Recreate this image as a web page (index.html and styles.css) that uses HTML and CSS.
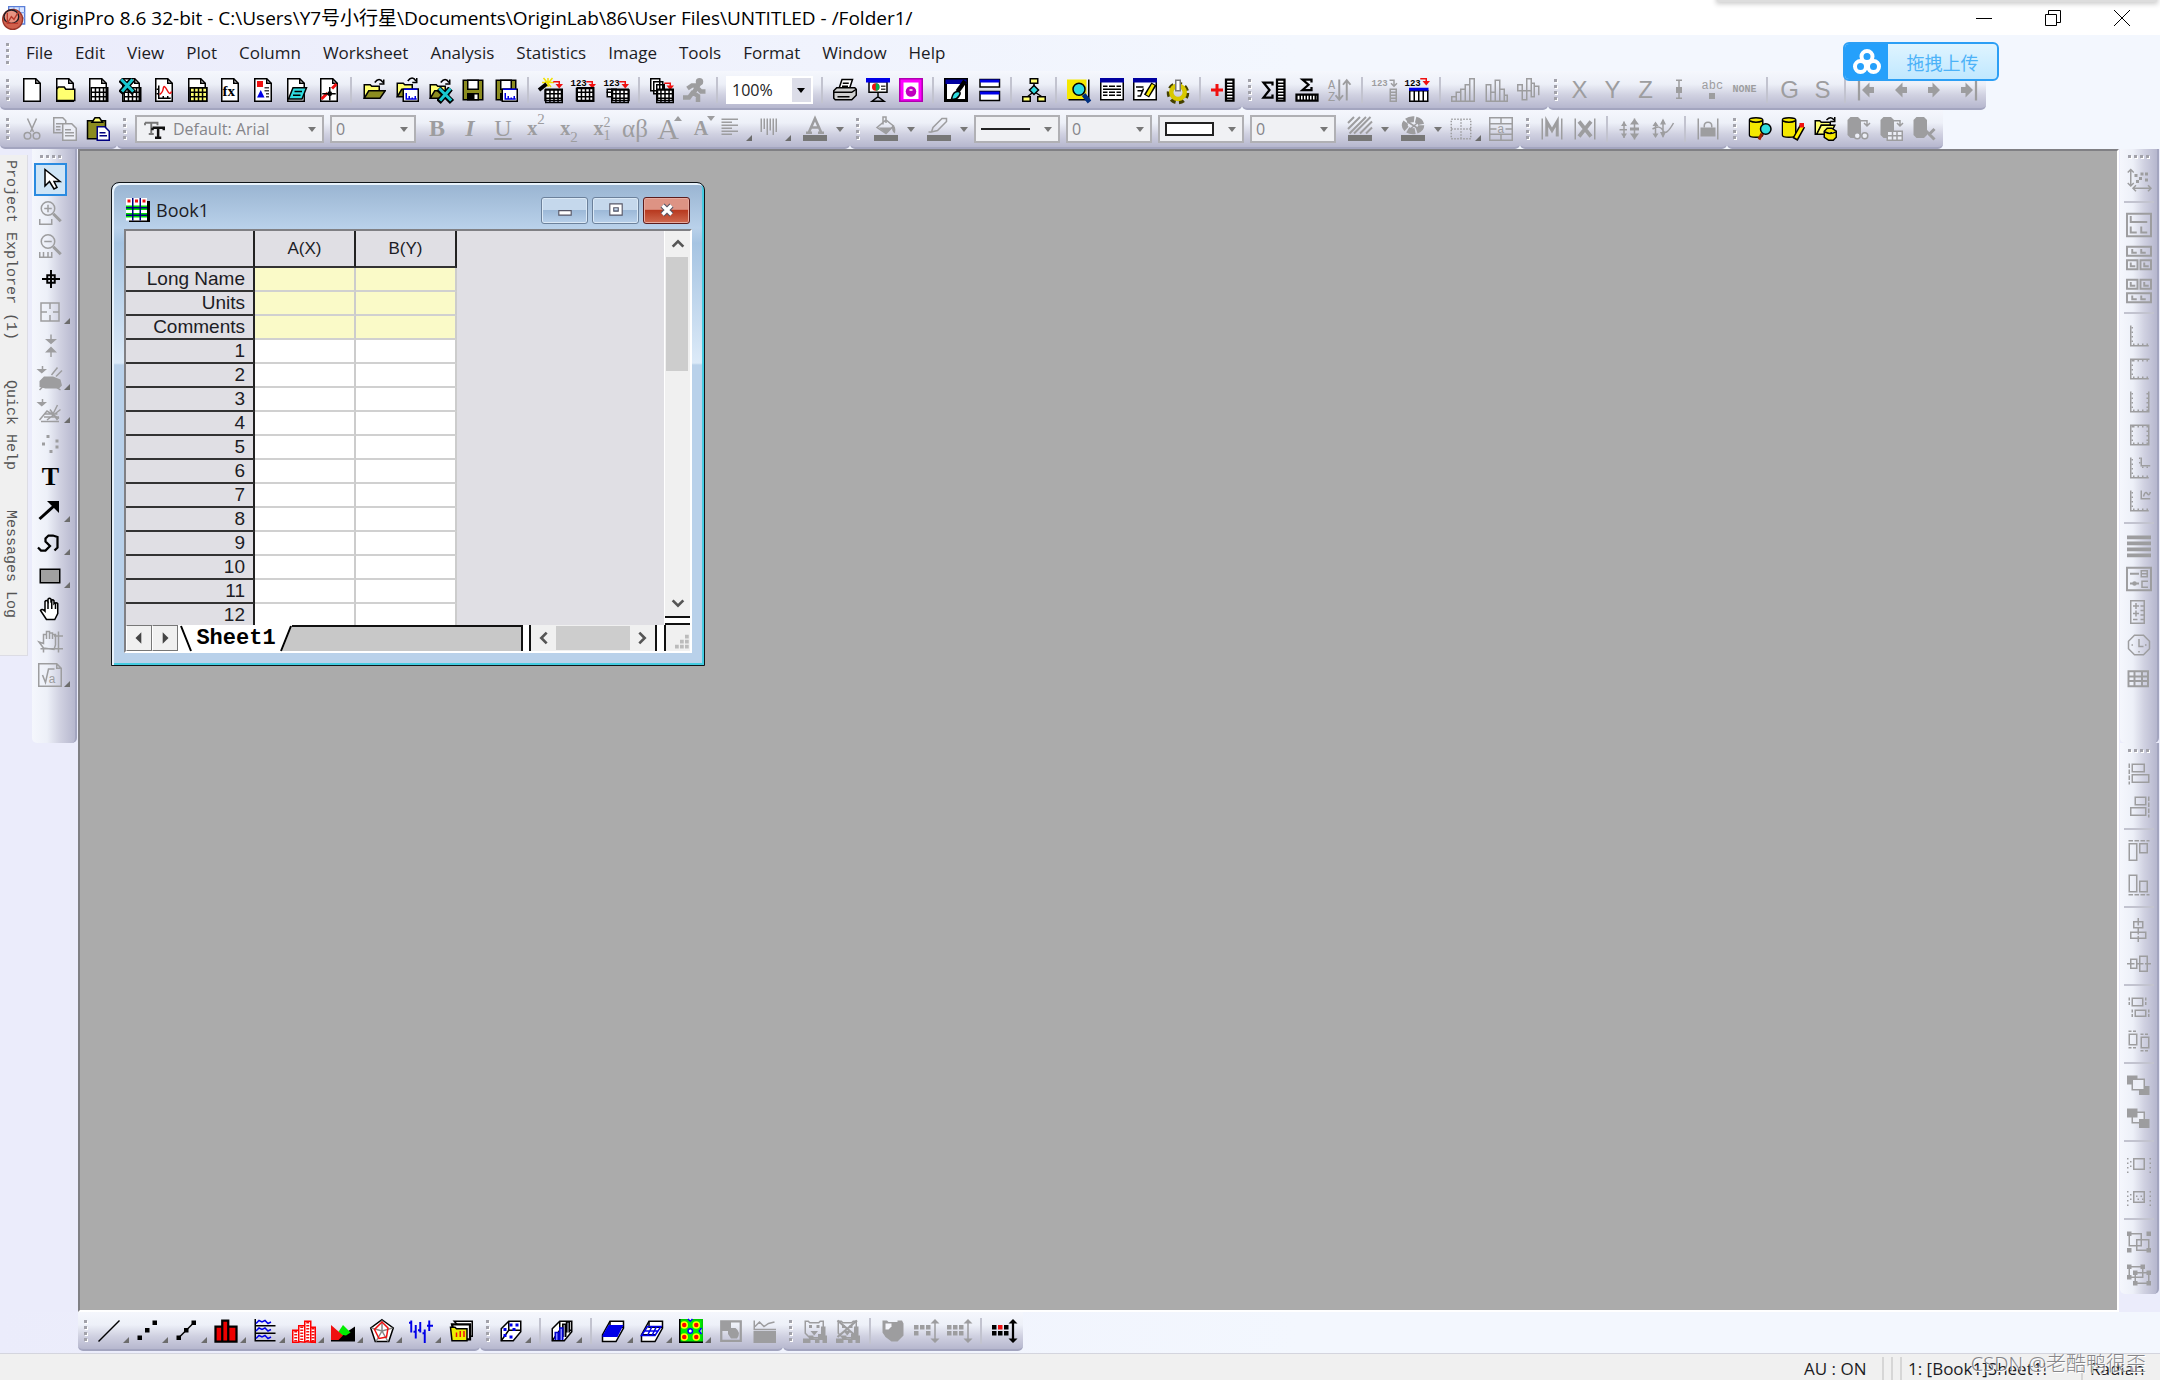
FILE: index.html
```html
<!DOCTYPE html>
<html lang="en">
<head>
<meta charset="utf-8">
<title>OriginPro 8.6</title>
<link rel="stylesheet" href="styles.css">
</head>
<body>
<svg class="defs" aria-hidden="true">
  <symbol id="doc" viewBox="0 0 16 16"><path class="w" d="M2.500.5h8l3 3v12h-11z"/><path d="M10.500.5v3h3"/></symbol>
  <symbol id="grid" viewBox="0 0 16 16"><path d="M3.500 6.500h11v9h-11zM3.500 9.500h11M3.500 12.500h11M6.300 6.500v9M9 6.500v9M11.700 6.500v9"/></symbol>
  <symbol id="open" viewBox="0 0 16 16"><path class="y" d="M1.500 13.500v-9h4l1 1h5v3"/><path class="o" d="M1.500 13.500l3-5h11l-3.500 5z"/><path d="M8.500 3q3-4 5.500 0M14.500 1v3h-3"/></symbol>
  <symbol id="disk" viewBox="0 0 16 16"><path class="o" d="M1.500 1.500h13v13H1.500z"/><path class="w" d="M4.500 1.500h7v6h-7z"/><path class="k" d="M4 10h8v5H4z"/><path class="wf" d="M9 11h2v3H9z"/></symbol>
  <symbol id="win" viewBox="0 0 16 16"><path class="w" d="M5.500 7.500h10v8h-10z"/><path class="bf" d="M6 7h9v1H6z"/><path class="bs" d="M7.500 10v4h7M9.500 14v-2M11.500 14v-1M13.500 14v-2"/></symbol>
  <symbol id="ex" viewBox="0 0 16 16"><path d="M1 1l9 9M9 1l-8 9" class="xs"/><path d="M1.500 1l8 8M9 1l-7 8" class="xc"/></symbol>
  <symbol id="redin" viewBox="0 0 16 16"><path class="rs" d="M9.500 2.500h4V5"/><path class="rf" d="M11 4h5l-2.500 3z"/></symbol>
  <symbol id="cube" viewBox="0 0 16 16"><path class="w" d="M1.500 6.500l5-5h8v7l-5 6h-8z"/><path d="M6.500 1.500v6h8M6.500 7.500l-5 7"/></symbol>
  <symbol id="box" viewBox="0 0 16 16"><path class="w" d="M1 10.500l5-9h9v4.500l-5 9H1z"/><path d="M6 1.500v4h9M1 10.500h9"/></symbol>
  <symbol id="face" viewBox="0 0 16 16"><path d="M1.500 1.500h2l1 1h6l1-1h2v8l-3 3h-6l-3-3z"/><path class="k" d="M4 4h2v2H4zM9 4h2v2H9zM5 8h5l-2.500 3zM0 13h4v-2h3v2h3v-3h2V5h3v6h1v5h-3v-2h-2v2h-3v-2H5v2H0z"/></symbol>
  <symbol id="cyl" viewBox="0 0 16 16"><path class="k" d="M1 2l2-2h5l2 2v10l-2 2H3l-2-2z"/></symbol>
  <symbol id="cyly" viewBox="0 0 16 16"><path class="yd" d="M.500 2q0-1.500 4.500-1.500T9.500 2v10q0 1.500-4.500 1.500T.500 12z"/><path d="M.500 2.500q4.500 2 9 0"/></symbol>
</svg>

<header class="titlebar">
  <svg class="logo" viewBox="0 0 18 18"><path d="M5 .5h12v13H5z" fill="#dbe6ff" stroke="#5b7fd8"/><path d="M9 1v12M13 1v12M5 5h12M5 9h12" stroke="#83a3e8"/><ellipse cx="8" cy="10" rx="7.500" ry="7.500" fill="#d0604c" stroke="#9b3528"/><ellipse cx="7" cy="8" rx="5.500" ry="5" fill="#e89482"/><path d="M4 13l3-5 2 2 3-5M4 5v8h8" stroke="#b83a2c" fill="none"/></svg>
  <h1>OriginPro 8.6 32-bit - C:\Users\Y7号小行星\Documents\OriginLab\86\User Files\UNTITLED - /Folder1/</h1>
  <div class="caption">
    <button aria-label="Minimize"><svg viewBox="0 0 16 16"><path d="M0 8.500h16"/></svg></button>
    <button aria-label="Restore"><svg viewBox="0 0 16 16"><path d="M.500 4.500h11v11H.500zM3.500 4V.500h12v12H12"/></svg></button>
    <button aria-label="Close"><svg viewBox="0 0 16 16"><path d="M0 0l16 16M16 0L0 16"/></svg></button>
  </div>
  <div class="topshade"></div>
</header>

<nav class="menubar">
  <span class="grip"></span>
  <button>File</button><button>Edit</button><button>View</button><button>Plot</button><button>Column</button><button>Worksheet</button><button>Analysis</button><button>Statistics</button><button>Image</button><button>Tools</button><button>Format</button><button>Window</button><button>Help</button>
  <button class="upload"><span class="cloud"><svg viewBox="0 0 28 26"><g fill="none" stroke="#fff" stroke-width="4"><circle cx="14" cy="7.500" r="5.500"/><circle cx="7.500" cy="17.500" r="5.500"/><circle cx="20.500" cy="17.500" r="5.500"/></g></svg></span><span class="uptext">拖拽上传</span></button>
</nav>

<div class="toolrow">
  <div class="toolbar">
    <span class="grip"></span>
    <button aria-label="New Project"><svg viewBox="0 0 16 16"><use href="#doc"/></svg></button>
    <button aria-label="New Folder"><svg viewBox="0 0 16 16"><use href="#doc"/><path class="y" d="M2.500 15V7.500l1-1.500h4l1 1.500h6V15z"/></svg></button>
    <button aria-label="New Workbook"><svg viewBox="0 0 16 16"><use href="#doc"/><use href="#grid"/></svg></button>
    <button aria-label="New Excel"><svg viewBox="0 0 16 16"><use href="#doc"/><use href="#grid"/><use href="#ex"/></svg></button>
    <button aria-label="New Graph"><svg viewBox="0 0 16 16"><use href="#doc"/><path d="M4.500 5v8.500h8M3 7.500h2M3 10.500h2M7.500 12v2M10.500 12v2"/><path class="rs" d="M5 11q2-1 2.500-4t2.500 1 3 1"/></svg></button>
    <button aria-label="New Matrix"><svg viewBox="0 0 16 16"><use href="#doc"/><path class="y" d="M3.500 6.500h11v9h-11z"/><use href="#grid"/></svg></button>
    <button aria-label="New Function"><svg viewBox="0 0 16 16"><use href="#doc"/><text x="3" y="12" class="t9">fx</text></svg></button>
    <button aria-label="New Layout"><svg viewBox="0 0 16 16"><use href="#doc"/><path class="rf" d="M4 2h4v4H4z"/><path class="bf" d="M4 13l2.500-5L9 13z"/><path class="ks" d="M9 6.500h3M9 8.500h3M10 10.500h2M10 12.500h2"/></svg></button>
    <button aria-label="New Notes"><svg viewBox="0 0 16 16"><use href="#doc"/><path class="c" d="M6 6.500h9l-3 7.500H3z"/><path d="M7 9h5M6 11.500h5"/></svg></button>
    <button aria-label="Digitize"><svg viewBox="0 0 16 16"><use href="#doc"/><path class="rs" d="M3 14l4-4M10 7l3-3" stroke-width="2"/><path d="M3.500 10.500h9M8.500 6v9"/><circle cx="8.500" cy="10.500" r="1.600" class="k"/></svg></button>
    <i class="sep"></i>
    <button aria-label="Open"><svg viewBox="0 0 16 16"><use href="#open"/></svg></button>
    <button aria-label="Open Template"><svg viewBox="0 0 16 16"><use href="#open" y="-1"/><use href="#win"/></svg></button>
    <button aria-label="Open Excel"><svg viewBox="0 0 16 16"><use href="#open"/><use href="#ex" x="6" y="6"/></svg></button>
    <button aria-label="Save Project"><svg viewBox="0 0 16 16"><use href="#disk"/></svg></button>
    <button aria-label="Save Template"><svg viewBox="0 0 16 16"><use href="#disk"/><use href="#win"/></svg></button>
    <i class="sep"></i>
    <button aria-label="Import Wizard"><svg viewBox="0 0 16 16"><path stroke="#f0e000" d="M3 0l5 6M9 0L4 6M2 3h8M6 0v6"/><path d="M0 8l5-4" stroke-width="2.500"/><use href="#redin"/><path class="w" d="M4 8h11v7H4z"/><use href="#grid" y="1" x="1"/></svg></button>
    <button aria-label="Import ASCII"><svg viewBox="0 0 16 16"><text x="-1" y="5" class="t6">123</text><use href="#redin"/><path class="w" d="M3 7h11v8H3z"/><use href="#grid"/></svg></button>
    <button aria-label="Import Multiple ASCII"><svg viewBox="0 0 16 16"><text x="-1" y="5" class="t6">123</text><use href="#redin"/><path class="w" d="M1.500 7.500h6v5h-6z"/><path d="M1 9.500h4"/><path class="w" d="M5 8h11v7H5z"/><use href="#grid" x="1" y="1"/></svg></button>
    <i class="sep"></i>
    <button aria-label="Batch Processing"><svg viewBox="0 0 16 16"><path class="w" d="M.500.500h6v8h-6zM2.500 2.500h6v8h-6zM4.500 4.500h5v8h-5z"/><use href="#redin" y="1"/><path class="w" d="M5 8h10v7H5z"/><use href="#grid" x="1" y="1"/></svg></button>
    <button disabled aria-label="Recalculate"><svg viewBox="0 0 16 16"><circle class="k" cx="11" cy="2.500" r="2.500"/><path d="M3 7l3-2h4l-3 5 3 2v4M7 9l-3 4H0M10 7l2 2h3" stroke-width="3"/></svg></button>
    <i class="sep"></i>
    <label class="combo zoom"><select aria-label="Zoom"><option>100%</option></select></label>
    <i class="sep"></i>
    <button aria-label="Print"><svg viewBox="0 0 16 16"><path class="w" d="M4 7l2-6h7l-2 6z"/><path d="M6.500 3.500h4M6 5.500h4"/><path class="g" d="M.500 8.500l2-2h12l1 1v4l-3 3h-11l-1-1z"/><path d="M.500 9.500h12l3-2M3 12.500h8"/></svg></button>
    <button aria-label="Slide Show"><svg viewBox="0 0 16 16"><path class="w" d="M2 2.500h12v7H2z"/><path class="bf" d="M0 0h16v3H0z"/><circle cx="6.500" cy="6" r="2.500" class="rf"/><path fill="#00b050" stroke="none" d="M6.500 3.500a2.500 2.500 0 010 5z"/><path class="ks" d="M10 5.500h3M10 7.500h3"/><path d="M8 10v3M4 15.500l4-3 4 3z"/></svg></button>
    <button aria-label="Custom Routine"><svg viewBox="0 0 16 16"><path fill="#f0f" stroke="#b000b0" d="M.500.500h15v15H.500z"/><path fill="#fff" stroke="none" d="M3 3h10v11H3z"/><circle cx="8" cy="9" r="3.500" fill="#c000c0" stroke="none"/><path stroke="#fff" d="M7 8h2"/></svg></button>
    <i class="sep"></i>
    <button aria-label="Edit Theme"><svg viewBox="0 0 16 16"><path class="w" d="M1 1h14v14H1z" stroke-width="2"/><path class="nf" d="M1 1h14v3H1z"/><path d="M14 2L9 9" stroke-width="3"/><path class="c" d="M5 14q1-5 4-5t1 3-5 2z"/></svg></button>
    <button aria-label="Duplicate"><svg viewBox="0 0 16 16"><path class="w" d="M2 1h13v5H2zM2 9h13v6H2z"/><path class="bf" d="M2 1h13v2H2zM2 9h13v2H2z"/></svg></button>
    <i class="sep"></i>
    <button aria-label="Project Explorer"><svg viewBox="0 0 16 16"><path d="M8 3v4M8 9l-5 4M8 9l6 4"/><path class="y" d="M5.500.500h5v3h-5zM.500 12.500h5v3h-5zM10.500 12.500h5v3h-5z"/><path class="c" d="M8 5l3 3-3 3-3-3z"/></svg></button>
    <i class="sep"></i>
    <button aria-label="View Results"><svg viewBox="0 0 16 16"><path fill="#f5e800" stroke="none" d="M0 1h13v13H0z"/><path d="M1 14.500h13M14.500 1v13"/><circle cx="8" cy="7.500" r="4" class="c"/><path stroke="#003080" stroke-width="3" d="M11 11l4 5"/></svg></button>
    <button aria-label="Results Log"><svg viewBox="0 0 16 16"><path class="w" d="M.500.500h15v14H.500z"/><path class="nf" d="M0 0h16v3H0z"/><path d="M2 5.500h3M6 5.500h4M11 5.500h3M2 7.500h12M2 9.500h3M6 9.500h4M11 9.500h3M2 11.500h3M6 11.500h4M11 11.500h3"/></svg></button>
    <button aria-label="Script Window"><svg viewBox="0 0 16 16"><path class="w" d="M.500.500h15v14H.500z"/><path class="nf" d="M0 0h16v3H0z"/><path d="M2 6h5M3 8.500h4M3 12h2l2-5"/><path d="M14 4l-5 8" stroke-width="4"/><path stroke="#f5e800" stroke-width="2" d="M13.500 4.500l-4 7"/></svg></button>
    <button aria-label="Code Builder"><svg viewBox="0 0 16 16"><circle cx="8" cy="10" r="5.500" stroke="#444000" stroke-width="4" stroke-dasharray="3 2"/><circle cx="8" cy="9.500" r="4.500" stroke="#d8c800" stroke-width="3"/><path fill="#fff" stroke="#777" d="M6.500 1.500h3v7h-3z"/></svg></button>
    <i class="sep"></i>
    <button aria-label="Add New Columns"><svg viewBox="0 0 16 16"><path class="rs" stroke-width="2" d="M0 8h8M4 4v8"/><path class="w" d="M10 1h5v14h-5z" stroke-width="1.500"/><path d="M10 3.500h5M10 5.500h5M10 7.500h5M10 9.500h5M10 11.500h5M10 13.500h5"/></svg></button>
  </div>
  <div class="toolbar">
    <span class="grip"></span>
    <button aria-label="Column Statistics"><svg viewBox="0 0 16 16"><path d="M7 5V3H1l4 5-4 5h6v-2" stroke-width="1.500"/><path class="w" d="M10 1h5v14h-5z" stroke-width="1.500"/><path d="M10 3.500h5M10 5.500h5M10 7.500h5M10 9.500h5M10 11.500h5M10 13.500h5"/></svg></button>
    <button aria-label="Row Statistics"><svg viewBox="0 0 16 16"><path d="M11 3V1H5l4 3.500L5 8h6V6" stroke-width="1.500"/><path class="w" d="M1 11h14v4H1z" stroke-width="1.500"/><path d="M3.500 11v4M5.500 11v4M7.500 11v4M9.500 11v4M11.500 11v4M13.500 11v4"/></svg></button>
    <button disabled aria-label="Sort"><svg viewBox="0 0 16 16"><text x="0" y="7" class="t8">A</text><text x="0" y="15" class="t8">Z</text><path d="M7.500 1v13M5 11.500l2.500 3 2.500-3M12.500 15V2M10 4.500l2.500-3 2.500 3" stroke-width="1.300"/></svg></button>
    <i class="sep"></i>
    <button disabled aria-label="Set Column Values"><svg viewBox="0 0 16 16"><text x="-1" y="5" class="t6">123</text><path d="M11 1.500h3v3M12 3.500l2 2 2-2M11.500 7.500h4v8h-4zM11.500 9.500h4M11.500 11.500h4M11.500 13.500h4"/></svg></button>
    <button aria-label="Set Multiple Column Values"><svg viewBox="0 0 16 16"><text x="-1" y="5" class="t6">123</text><use href="#redin" y="-2"/><path class="w" d="M2.500 8.500h12v7h-12zM5.500 8v7M8.500 8v7M11.500 8v7"/><path class="bf" d="M2 6.500h13v2H2z"/></svg></button>
    <i class="sep"></i>
    <button disabled aria-label="Column Chart"><svg viewBox="0 0 16 16"><path d="M.500 15.500v-3h3v3M3.500 15V9.500h3V15M6.500 15V7.500h3V15M9.500 15V4.500h3V15M12.500 15V.500h3v15H0"/></svg></button>
    <button disabled aria-label="Histogram"><svg viewBox="0 0 16 16"><path d="M1.500 15V4.500h3V15M4.500 9.500h3M7.500 15V1.500h3V15M10.500 7.500h3V15M13.500 11.500h2v4H1"/></svg></button>
    <button disabled aria-label="Difference Bars"><svg viewBox="0 0 16 16"><path d="M.500 8.500v-4h3v4zM3.500 8.500h3v6h-3zM6.500 8.500v-8h3v8zM9.500 3.500h2v9h-2zM11.500 8.500v-3h3v6"/></svg></button>
  </div>
  <div class="toolbar">
    <span class="grip"></span>
    <button disabled class="lt">X</button><button disabled class="lt">Y</button><button disabled class="lt">Z</button>
    <button disabled aria-label="Set as Y Error"><svg viewBox="0 0 16 16"><path d="M6 1.500h4M8 1v13M6 13.500h4"/><path class="k" d="M6 6h4v4H6z"/></svg></button>
    <button disabled aria-label="Set as Label"><svg viewBox="0 0 16 16"><text x="1" y="7" class="t8">abc</text><path class="k" d="M6 10h4v4H6z"/></svg></button>
    <button disabled class="tiny">NONE</button>
    <i class="sep"></i>
    <button disabled class="lt">G</button><button disabled class="lt">S</button>
    <i class="sep"></i>
    <button disabled aria-label="Move to First"><svg viewBox="0 0 16 16"><path d="M2 1v14" stroke-width="1.500"/><path class="k" d="M4 8l5-5v3h3v4H9v3z"/></svg></button>
    <button disabled aria-label="Move Left"><svg viewBox="0 0 16 16"><path class="k" d="M4 8l5-5v3h3v4H9v3z"/></svg></button>
    <button disabled aria-label="Move Right"><svg viewBox="0 0 16 16"><path class="k" d="M12 8L7 3v3H4v4h3v3z"/></svg></button>
    <button disabled aria-label="Move to Last"><svg viewBox="0 0 16 16"><path d="M14 1v14" stroke-width="1.500"/><path class="k" d="M12 8L7 3v3H4v4h3v3z"/></svg></button>
  </div>
</div>

<div class="toolrow">
  <div class="toolbar">
    <span class="grip"></span>
    <button disabled aria-label="Cut"><svg viewBox="0 0 16 16"><path d="M5 1l4 9M11 1L7 10"/><circle cx="5" cy="12.500" r="2.200"/><circle cx="11" cy="12.500" r="2.200"/></svg></button>
    <button disabled aria-label="Copy"><svg viewBox="0 0 16 16"><path d="M.500.500h6l2 2v8h-8zM2 4.500h4M2 6.500h3M2 8.500h3"/><path class="w" d="M6.500 4.500h6l3 3v8h-9z"/><path d="M8 8.500h4M8 10.500h6M8 12.500h6"/></svg></button>
    <button aria-label="Paste"><svg viewBox="0 0 16 16"><path class="o" d="M1 2.500h12v12H1z"/><path class="y" d="M4 3.500l2-3h3l2 3z"/><path fill="#fff" stroke="#000080" d="M7.500 6.500h5l3 3v6h-8z"/><path stroke="#000080" d="M9 10.500h4M9 12.500h5"/></svg></button>
  </div>
  <div class="toolbar">
    <span class="grip"></span>
    <label class="combo font"><svg viewBox="0 0 16 16"><path d="M0 3h10v2M0 3v2M5 3v9M3 12h4" stroke="#777" stroke-width="1.500"/><path d="M6 7h9v2M6 7v2M10.500 7v8M8 15h5" stroke="#111" stroke-width="2"/></svg><select disabled aria-label="Font"><option>Default: Arial</option></select></label>
    <label class="combo"><select disabled aria-label="Font Size"><option>0</option></select></label>
    <button disabled class="sf"><b>B</b></button><button disabled class="sf"><b><em>I</em></b></button><button disabled class="sf"><u>U</u></button>
    <button disabled class="sf sm">x<sup>2</sup></button><button disabled class="sf sm">x<sub>2</sub></button>
    <button disabled class="sf sm">x<span class="stack"><span>2</span><span>1</span></span></button>
    <button disabled class="sf greek">αβ</button>
    <button disabled class="sf big up">A</button><button disabled class="sf sm down">A</button>
    <button disabled class="more" aria-label="Align"><svg viewBox="0 0 16 16"><path d="M1 1.500h11M1 3.500h7M1 5.500h11M1 7.500h7M1 9.500h11M1 11.500h7"/></svg></button>
    <button disabled class="more" aria-label="Vertical Align"><svg viewBox="0 0 16 16"><path d="M1.500 1v9M3.500 1v7M5.500 1v11M7.500 1v8M9.500 1v11M11.500 1v9"/></svg></button>
    <button disabled class="split" aria-label="Font Color"><svg viewBox="0 0 16 16"><path d="M4 10L8 1l4 9M5 7h5M2 10.500h4M10 10.500h4" stroke-width="1.700"/><path class="dk" d="M0 12h16v4H0z"/></svg></button>
  </div>
  <div class="toolbar">
    <span class="grip"></span>
    <button disabled class="split" aria-label="Fill Color"><svg viewBox="0 0 16 16"><path d="M2 7l6-5 5 4-5 5zM6 5V0h2v4"/><path class="k" d="M3 7h9l-4 4zM12 5q3 1 2 6-2-1-2-4z"/><path class="dk" d="M0 12h16v4H0z"/></svg></button>
    <button disabled class="split" aria-label="Line Color"><svg viewBox="0 0 16 16"><path d="M3 10l1-3 6-6h3v2l-6 6zM1 10h2"/><path class="dk" d="M0 12h16v4H0z"/></svg></button>
    <label class="combo"><select disabled aria-label="Line Style"></select><span class="line"></span></label>
    <label class="combo"><select disabled aria-label="Line Width"><option>0</option></select></label>
    <label class="combo"><select disabled aria-label="Fill Pattern"></select><span class="rect"></span></label>
    <label class="combo"><select disabled aria-label="Pattern Width"><option>0</option></select></label>
    <button disabled class="split" aria-label="Pattern"><svg viewBox="0 0 16 16"><path d="M0 4l4-4M0 8l8-8M1 11L12 0M4 11L15 0M8 11l8-8M12 11l4-4" stroke-width="1.300"/><path class="dk" d="M0 12h16v4H0z"/></svg></button>
    <button disabled class="split" aria-label="Palette"><svg viewBox="0 0 16 16"><ellipse cx="8" cy="5.500" rx="5.500" ry="4" stroke-width="4" stroke-dasharray="5 1"/><path d="M4 3l8 5M12 3l-7 6"/><path class="dk" d="M0 12h16v4H0z"/></svg></button>
    <button disabled class="more" aria-label="Borders"><svg viewBox="0 0 16 16"><path d="M1.500 1.500h13v13h-13zM8 1.500v13M1.500 8h13" stroke-dasharray="1 1"/></svg></button>
    <button disabled aria-label="Merge Cells"><svg viewBox="0 0 16 16"><path d="M.500.500h15v15H.500zM.500 4.500h15M.500 11.500h15M8 .500v4M8 11.500v4M1 8h4M11 8h4"/><text x="5.500" y="10.500" class="t8">a</text></svg></button>
  </div>
  <div class="toolbar">
    <span class="grip"></span>
    <button disabled aria-label="Mask Range"><svg viewBox="0 0 16 16"><path d="M1.500 1v14M14.500 1v14"/><path d="M4.500 13V3L8 9l3.500-6v10" stroke-width="2"/></svg></button>
    <button disabled aria-label="Unmask Range"><svg viewBox="0 0 16 16"><path d="M1.500 1v14M14.500 1v14"/><path d="M4 3l8 10M12 3L4 13" stroke-width="2.500"/></svg></button>
    <i class="sep"></i>
    <button disabled aria-label="Shift Up"><svg viewBox="0 0 16 16"><path d="M4 3v11M11 1v14"/><path class="k" d="M2 6l2-3 2 3zM2 11l2 3 2-3zM8 5l3-4 3 4zM8 11l3 4 3-4zM1 8h5v1H1zM8 7h6v2H8z"/></svg></button>
    <button disabled aria-label="Shift Trend"><svg viewBox="0 0 16 16"><path d="M3 4v9M8 2v11M1 8q5-3 7 1t7-5"/><path class="k" d="M1 6l2-3 2 3zM1 11l2 3 2-3zM6 5l2-4 2 4zM6 10l2 4 2-4z"/></svg></button>
    <i class="sep"></i>
    <button disabled aria-label="Lock"><svg viewBox="0 0 16 16"><path d="M1.500 1v14M14.500 1v14M5.500 7V6q0-2.500 2.500-2.500T10.500 6v1"/><path class="k" d="M3 7h10v6H3z"/></svg></button>
  </div>
  <div class="toolbar">
    <span class="grip"></span>
    <button aria-label="Open Query"><svg viewBox="0 0 16 16"><use href="#cyly" x="1"/><circle class="c" cx="12.500" cy="8" r="3.500"/><path d="M10 11l-2 4" stroke="#a02000" stroke-width="2"/></svg></button>
    <button aria-label="Edit Query"><svg viewBox="0 0 16 16"><use href="#cyly" x="1"/><path stroke="#000" stroke-width="4" d="M15 6l-5 9"/><path stroke="#fff000" stroke-width="2" d="M15 6l-4.500 8"/><path class="rf" d="M13 4h3v3h-3z"/></svg></button>
    <button aria-label="Load Query"><svg viewBox="0 0 16 16"><path class="y" d="M1.500 11.500v-9h3l1 1h6v2h-6l-3 6z"/><path class="y" d="M2.500 11.500l3-6h9l-3 6z"/><path d="M9 2q3-3 5 0M14.500 0v3h-3"/><path class="yd" d="M7.500 9.500l2-2h3l3 2v4l-2 2h-3l-3-2zM8 10q4 2 7 0"/></svg></button>
    <button disabled aria-label="Import Query"><svg viewBox="0 0 16 16"><use href="#cyl"/><path d="M10 2.500h4v3M12 4l2 2 2-2"/><circle cx="7.500" cy="12.500" r="2" class="w"/><circle cx="12.500" cy="12.500" r="2" class="w"/></svg></button>
    <button disabled aria-label="Import Preview"><svg viewBox="0 0 16 16"><use href="#cyl"/><path d="M10 2.500h4v3M12 4l2 2 2-2"/><path class="w" d="M5.500 9.500h10v6h-10zM5.500 12.500h10M9 9.500v6M12 9.500v6"/></svg></button>
    <button disabled aria-label="Remove Query"><svg viewBox="0 0 16 16"><use href="#cyl"/><path d="M9 9l6 6M15 8l-4 4" stroke-width="2"/></svg></button>
  </div>
</div>

<main class="main">
  <aside class="dock"><div class="docktabs"><button>Project Explorer (1)</button><button>Quick Help</button><button>Messages Log</button></div></aside>
  <div class="side left">
    <div class="toolbar vert">
      <span class="grip"></span>
      <button class="on" aria-label="Pointer"><svg viewBox="0 0 16 16"><path class="w" d="M4 1v11l3-3 3 5 2-1-2-4h4z"/></svg></button>
      <button disabled aria-label="Zoom In"><svg viewBox="0 0 16 16"><circle cx="6" cy="5" r="4.500"/><path d="M3.500 5h5M6 2.500v5M.500 12v3.500h8V12"/><path d="M9.500 8.500l5 5" stroke-width="2"/></svg></button>
      <button disabled aria-label="Zoom Out"><svg viewBox="0 0 16 16"><circle cx="6" cy="5" r="4.500"/><path d="M3.500 5h5M.500 12v3.500h8V12M3 12v3M6 12v3"/><path d="M9.500 8.500l5 5" stroke-width="2"/></svg></button>
      <button aria-label="Screen Reader"><svg viewBox="0 0 16 16"><path d="M2 8h12M8 2v12M5.500 5.500h5v5h-5z" stroke-width="1.300"/></svg></button>
      <button disabled class="more" aria-label="Data Reader"><svg viewBox="0 0 16 16"><path d="M2 2h12v12H2zM8 2v4M8 10v4M2 8h4M10 8h4"/></svg></button>
      <button disabled aria-label="Data Selector"><svg viewBox="0 0 16 16"><path d="M8 1v4M8 11v5"/><path class="k" d="M4 4h8L8 7.500zM4 13h8L8 9z"/></svg></button>
      <button disabled class="more" aria-label="Mask"><svg viewBox="0 0 16 16"><path d="M3 0v3M9 6l4-5M12 7l4-4M3 14l-2 2M12 14l3 2"/><path class="k" d="M-1 2h7L2.500 5zM1 10l3-3h6l5 2 1 4-2 2H5l-4-1z"/></svg></button>
      <button disabled class="more" aria-label="Regional Mask"><svg viewBox="0 0 16 16"><path d="M3 0v4M1 14l5-6 8 5M6 14l9-7M8 7l5 7M4 10h9M13 4l-3 6M2 15h12M4 12h10"/><path class="k" d="M-1 2h7L2.500 5z"/></svg></button>
      <button disabled aria-label="Draw Data"><svg viewBox="0 0 16 16"><path class="k" d="M5 2h2v2H5zM11 5h2v2h-2zM2 7h2v2H2zM11 9h2v2h-2zM7 12h2v2H7z"/></svg></button>
      <button class="tt">T</button>
      <button class="more" aria-label="Arrow"><svg viewBox="0 0 16 16"><path d="M1 14L11 5" stroke-width="2"/><path class="k" d="M6 2h8v8z"/></svg></button>
      <button class="more" aria-label="Curve"><svg viewBox="0 0 16 16"><path d="M0 11l2 2h3l3-3-3-3V5l2-2h3l3 1v7l-2 2" stroke-width="1.500"/></svg></button>
      <button class="more" aria-label="Rectangle"><svg viewBox="0 0 16 16"><path fill="#a0a0a0" d="M1.500 3.500h13v9h-13z"/></svg></button>
      <button aria-label="Pan"><svg viewBox="0 0 16 16"><path class="w" d="M5 15l-4-6q1-1.500 3 .500V3q1-1.500 2 0V1.500q1-1.500 2 0V2.500q1-1.500 2 0v2q1.500-1.500 2.500 0V11l-2 4z"/><path d="M6 3v5M8.500 2v6M11 4v4"/></svg></button>
      <button disabled aria-label="Rescale"><svg viewBox="0 0 16 16"><path d="M3 12l-3-4 3 1V3h2v3-5h2v5-4h2v4-3h2v7l-1 3zM3 12v3M13 1v14M10 4h6M1 12.500h15"/></svg></button>
      <button disabled class="more" aria-label="Insert Equation"><svg viewBox="0 0 16 16"><path d="M.500.500h12l3 3v12H.500zM12.500.500v3h3M3 8l2 5 2-9h4"/><text x="7" y="13" class="t8">a</text></svg></button>
    </div>
  </div>

  <section class="mdi">
    <article class="book">
      <div class="booktitle">
        <svg viewBox="0 0 16 16"><path fill="#000" stroke="none" d="M2 2h14v14H2z"/><path fill="#fff" stroke="none" d="M0 0h14v15H0z"/><path fill="#0d0" stroke="none" d="M0 5h14v3H0zM0 10h14v3H0z"/><path stroke="#000080" d="M4.500 0v15M9.500 0v15M0 6.500h14M0 11.500h14"/><path class="rf" d="M1 1h2v2H1zM6 1h2v2H6zM11 1h2v2h-2z"/></svg>
        <h2>Book1</h2>
        <button aria-label="Minimize window"><svg viewBox="0 0 16 16"><path fill="#fff" stroke="#556" d="M2.500 8.500h11v4h-11z"/></svg></button>
        <button aria-label="Maximize window"><svg viewBox="0 0 16 16"><path fill="#fff" stroke="#556" fill-rule="evenodd" d="M2.500 2.500h11v10h-11zM6 6v3h4V6z"/></svg></button>
        <button class="x" aria-label="Close window"><svg viewBox="0 0 16 16"><path stroke="#545464" stroke-width="5" d="M4 4l8 8M12 4l-8 8"/><path stroke="#fff" stroke-width="3" d="M4 4l8 8M12 4l-8 8"/></svg></button>
      </div>
      <div class="client">
        <div class="sheet">
          <table>
            <thead><tr><th></th><th>A(X)</th><th>B(Y)</th></tr></thead>
            <tbody>
              <tr class="meta"><th>Long Name</th><td></td><td></td></tr>
              <tr class="meta"><th>Units</th><td></td><td></td></tr>
              <tr class="meta"><th>Comments</th><td></td><td></td></tr>
              <tr><th>1</th><td></td><td></td></tr>
              <tr><th>2</th><td></td><td></td></tr>
              <tr><th>3</th><td></td><td></td></tr>
              <tr><th>4</th><td></td><td></td></tr>
              <tr><th>5</th><td></td><td></td></tr>
              <tr><th>6</th><td></td><td></td></tr>
              <tr><th>7</th><td></td><td></td></tr>
              <tr><th>8</th><td></td><td></td></tr>
              <tr><th>9</th><td></td><td></td></tr>
              <tr><th>10</th><td></td><td></td></tr>
              <tr><th>11</th><td></td><td></td></tr>
              <tr><th>12</th><td></td><td></td></tr>
            </tbody>
          </table>
        </div>
        <div class="vscroll">
          <button aria-label="Scroll up"><svg viewBox="0 0 12 12"><path d="M2 8l4-4 4 4"/></svg></button>
          <span class="thumb"></span>
          <button class="end" aria-label="Scroll down"><svg viewBox="0 0 12 12"><path d="M2 4l4 4 4-4"/></svg></button>
          <span class="splitter"></span>
        </div>
        <div class="tabs">
          <button class="nav" aria-label="Previous sheet"><svg viewBox="0 0 12 12"><path d="M8 1v10L3 6z"/></svg></button>
          <button class="nav" aria-label="Next sheet"><svg viewBox="0 0 12 12"><path d="M4 1v10l5-5z"/></svg></button>
          <button class="tab"><svg viewBox="0 0 112 26" aria-hidden="true"><path fill="#fff" stroke="none" d="M0 0h112l-10 26H0z"/><path stroke="#000" stroke-width="2" d="M1 1l10 25M101 26l10-25"/></svg><span>Sheet1</span></button>
          <span class="fill"></span>
          <div class="hscroll">
            <button aria-label="Scroll left"><svg viewBox="0 0 12 12"><path d="M8 2L4 6l4 4"/></svg></button>
            <span class="thumb"></span>
            <button aria-label="Scroll right"><svg viewBox="0 0 12 12"><path d="M4 2l4 4-4 4"/></svg></button>
          </div>
        </div>
        <div class="size"><svg viewBox="0 0 16 16"><path d="M12 3h3v3h-3zM8 7h3v3H8zM12 7h3v3h-3zM4 11h3v3H4zM8 11h3v3H8zM12 11h3v3h-3z"/></svg></div>
      </div>
    </article>
  </section>

  <div class="side right">
    <div class="toolbar vert">
      <span class="grip"></span>
      <button disabled aria-label="Rescale Axes"><svg viewBox="0 0 16 16"><path d="M2.500 1v11M.500 3l2-2 2 2M.500 10l2 2 2-2M4 13.500h12M6 11.500l-2 2 2 2M14 11.500l2 2-2 2"/><path class="k" d="M5 4h2v2H5zM8 6h2v2H8zM9 3h2v2H9zM12 3h2v2h-2zM12 7h2v2h-2zM6 8h2v2H6z"/></svg></button>
      <i class="sep"></i>
      <button disabled aria-label="Extract Layers"><svg viewBox="0 0 16 16"><path d="M0 .5h16v15H0zM2.500 2v4h11M2.500 9v4h4M9.500 9v4h4" stroke-width="1.300"/></svg></button>
      <button disabled aria-label="Extract to Graphs"><svg viewBox="0 0 16 16"><path d="M0 .5h16v6H0zM0 9.500h7v6H0zM9 9.500h7v6H9zM3.500 2v2.500h3M9.500 2v2.500h3M2.500 11v2.500h3M11.500 11v2.500h3" stroke-width="1.300"/></svg></button>
      <button disabled aria-label="Merge Graphs"><svg viewBox="0 0 16 16"><path d="M0 9.500h16v6H0zM0 .5h7v6H0zM9 .5h7v6H9zM3.500 11v2.500h3M9.500 11v2.500h3M2.500 2v2.500h3M11.500 2v2.500h3" stroke-width="1.300"/></svg></button>
      <i class="sep"></i>
      <button disabled aria-label="Bottom-Left Axes"><svg viewBox="0 0 16 16"><path d="M2.500 1v13.500h12"/><path stroke-dasharray="1 2" d="M3.500 2v11M4 13.500h11"/></svg></button>
      <button disabled aria-label="Top Axis"><svg viewBox="0 0 16 16"><path d="M15 1.500H2.500v13h12"/><path stroke-dasharray="1 2" d="M3.500 2v11M4 13.500h11M4 2.500h11"/></svg></button>
      <button disabled aria-label="Right Axis"><svg viewBox="0 0 16 16"><path d="M2.500 1v13.500h12V1"/><path stroke-dasharray="1 2" d="M3.500 2v11M4 13.500h11M13.500 2v11"/></svg></button>
      <button disabled aria-label="Box Axes"><svg viewBox="0 0 16 16"><path d="M2.500 1.500h12v13h-12z"/><path stroke-dasharray="1 2" d="M3.500 2v11M4 13.500h11M4 2.500h11M13.500 2v11"/></svg></button>
      <button disabled aria-label="Inset"><svg viewBox="0 0 16 16"><path d="M2.500 1v13.500h12M9.500 1v5.500h6"/><path stroke-dasharray="1 2" d="M3.500 2v11M4 13.500h11M8.500 1v5M10 7.500h6"/></svg></button>
      <button disabled aria-label="Inset with Data"><svg viewBox="0 0 16 16"><path d="M2.500 1v13.500h12M9.500 1v5.500h6M11 5q1-4 2.500-2t2-1"/><path stroke-dasharray="1 2" d="M3.500 2v11M4 13.500h11"/></svg></button>
      <i class="sep"></i>
      <button disabled aria-label="Color Scale"><svg viewBox="0 0 16 16"><path class="k" d="M0 1h16v2.500H0zM0 5h16v2.500H0zM0 9h16v2.500H0zM0 13h16v2.500H0z"/></svg></button>
      <button disabled aria-label="Legend"><svg viewBox="0 0 16 16"><path d="M0 .5h16v15H0zM2 4.500h6M2 11h6" stroke-width="1.300"/><circle cx="5" cy="11" r="1.500" class="k"/><path d="M9.500 2.500h4v4h-4zM9.500 4.500h4M14 9.500h-4v4h4"/></svg></button>
      <button disabled aria-label="Scale"><svg viewBox="0 0 16 16"><path d="M2.500.500h9v15h-9zM4 4h4M6 2v4M4 9h4M6 7v4M4 13h3M9 4h2M9 7h2M9 10h2M9 13h2"/></svg></button>
      <button disabled aria-label="Date and Time"><svg viewBox="0 0 16 16"><path d="M5 1.500h6l4 4v5l-4 4H5l-4-4v-5zM8 4v5h3M3 8h1M12 8h1M8 12v1"/></svg></button>
      <button disabled aria-label="New Table"><svg viewBox="0 0 16 16"><path d="M1 3.500h13v10H1zM1 7h13M1 10h13M5 3.500v10M10 3.500v10" stroke-width="1.300"/></svg></button>
    </div>
    <div class="toolbar vert">
      <span class="grip"></span>
      <button disabled aria-label="Align Left"><svg viewBox="0 0 16 16"><path stroke-dasharray="3 1" d="M1.500 1v14"/><path d="M3.500 1.500h8v5h-8zM3.500 8.500h11v5h-11z"/></svg></button>
      <button disabled aria-label="Align Right"><svg viewBox="0 0 16 16"><path stroke-dasharray="3 1" d="M14.500 1v14"/><path d="M5.500 1.500h7v5h-7zM2.500 8.500h10v5h-10z"/></svg></button>
      <i class="sep"></i>
      <button disabled aria-label="Align Top"><svg viewBox="0 0 16 16"><path stroke-dasharray="3 1" d="M1 .500h14"/><path d="M1.500 2.500h5v11h-5zM8.500 2.500h5v6h-5z"/></svg></button>
      <button disabled aria-label="Align Bottom"><svg viewBox="0 0 16 16"><path stroke-dasharray="3 1" d="M1 14.500h14"/><path d="M1.500 1.500h5v11h-5zM8.500 5.500h5v7h-5z"/></svg></button>
      <i class="sep"></i>
      <button disabled aria-label="Align Vertical"><svg viewBox="0 0 16 16"><path d="M4.500 2.500h6v4h-6zM2.500 9.500h10v4h-10zM7.500 0v5M7.500 6v5M7.500 12v4"/></svg></button>
      <button disabled aria-label="Align Horizontal"><svg viewBox="0 0 16 16"><path d="M2.500 5.500h4v6h-4zM8.500 3.500h5v10h-5zM0 8.500h5M6 8.500h5M12 8.500h4"/></svg></button>
      <i class="sep"></i>
      <button disabled aria-label="Uniform Width"><svg viewBox="0 0 16 16"><path d="M3.500 1.500h7v5h-7zM5.500 9.500h7v4h-7z"/><path stroke-dasharray="2 1" d="M1.500 1v6M12.500 1v6M3.500 9v6M14.500 9v6"/></svg></button>
      <button disabled aria-label="Uniform Height"><svg viewBox="0 0 16 16"><path d="M1.500 3.500h5v7h-5zM9.500 5.500h5v7h-5z"/><path stroke-dasharray="2 1" d="M1 1.500h6M1 12.500h6M9 3.500h6M9 14.500h6"/></svg></button>
      <i class="sep"></i>
      <button disabled aria-label="Front"><svg viewBox="0 0 16 16"><path class="k" d="M0 1h7v6H0zM8 8h7v6H8z"/><path class="w" d="M3.500 3.500h8v7h-8z"/></svg></button>
      <button disabled aria-label="Back"><svg viewBox="0 0 16 16"><path class="w" d="M3.500 3.500h8v7h-8z"/><path class="k" d="M0 1h7v6H0zM8 8h7v6H8z"/></svg></button>
      <i class="sep"></i>
      <button disabled aria-label="Front of Data"><svg viewBox="0 0 16 16"><path stroke-dasharray="1 2" d="M.500 4v10M2.500 6v6M15.500 4v10"/><path d="M4.500 4.500h7v7h-7z"/></svg></button>
      <button disabled aria-label="Behind Data"><svg viewBox="0 0 16 16"><path stroke-dasharray="1 2" d="M.500 4v10M2.500 6v6M15.500 4v10M6 7.500h5M7 9.500h4"/><path d="M4.500 4.500h7v7h-7z"/></svg></button>
      <i class="sep"></i>
      <button disabled aria-label="Group"><svg viewBox="0 0 16 16"><path d="M1.500 2.500h8v8h-8zM6.500 6.500h8v7h-8z"/><path class="k" d="M0 1h3v3H0zM13 1h3v3h-3zM0 12h3v3H0zM13 12h3v3h-3z"/></svg></button>
      <button disabled aria-label="Ungroup"><svg viewBox="0 0 16 16"><path d="M1.500 2.500h9v7h-9zM5.500 6.500h9v7h-9z"/><path class="k" d="M0 1h3v3H0zM9 1h3v3H9zM0 8h3v3H0zM4 5h3v3H4zM13 5h3v3h-3zM4 12h3v3H4zM13 12h3v3h-3z"/></svg></button>
    </div>
  </div>
</main>

<div class="toolrow bottom">
  <div class="toolbar">
    <span class="grip"></span>
    <button class="more" aria-label="Line"><svg viewBox="0 0 16 16"><path d="M1 15L15 1"/></svg></button>
    <button class="more" aria-label="Scatter"><svg viewBox="0 0 16 16"><path class="k" d="M1 11h3v3H1zM6 6h3v3H6zM11 1h3v3h-3z"/></svg></button>
    <button class="more" aria-label="Line and Symbol"><svg viewBox="0 0 16 16"><path d="M2 13L13 2"/><path class="k" d="M1 11h3v3H1zM6 6h3v3H6zM11 1h3v3h-3z"/></svg></button>
    <button class="more" aria-label="Column"><svg viewBox="0 0 16 16"><path fill="#e00" d="M1 15V5h4.500v10zM5.500 15V1h4v14zM9.500 15V5H15v10z" stroke-width="1.500"/></svg></button>
    <button class="more" aria-label="Stack"><svg viewBox="0 0 16 16"><path d="M1.500 0v15M1 4.500h14M1 9.500h14M1 14.500h14"/><path class="bs" d="M2 3l2-2 2 1 2-1 2 2 2-1M2 8l2-2 2 1 2-1 2 2 2-1M2 13l2-2 2 1 2-1 2 2 2-1"/></svg></button>
    <button class="more" aria-label="Stacked Column"><svg viewBox="0 0 16 16"><path fill="#fff" stroke="red" d="M.500 15.500v-8h4v8zM4.500 15V4.500h4v11zM8.500 15V1.500h4v14zM12.500 15V5.500h3v10z"/><path class="rs" stroke-width="2" stroke-dasharray="1 1" d="M2.500 8v7M6.500 5v10M10.500 2v13M14 6v9"/></svg></button>
    <button class="more" aria-label="Area"><svg viewBox="0 0 16 16"><path class="k" d="M0 15V9l7 2 9-6v10z"/><path fill="#0e0" stroke="none" d="M4 10l4-6 5 5-3 2z"/><path class="rf" d="M0 4l8 7-3 3H0z"/></svg></button>
    <button class="more" aria-label="Radar"><svg viewBox="0 0 16 16"><path class="w" d="M8 .5L15.500 6l-3 9h-9L.500 6z"/><path stroke="#888" d="M8 1v7l7-2M8 8l4 7M8 8l-4 7M8 8L1 6"/><path class="rs" d="M8 2l4 4-1 6-5 1-3-6z"/></svg></button>
    <button class="more" aria-label="Stock"><svg viewBox="0 0 16 16"><path class="bs" d="M1.500 1v8M0 2.500h2M4.500 4v9M3 8.500h2M7.500 2v7M6 7.500h2M10.500 7v9M9 9.500h2M13.500 1v7M12 4.500h4" stroke-width="1.300"/></svg></button>
    <button aria-label="Template Library"><svg viewBox="0 0 16 16"><path class="w" d="M3.500 1.500h12v10h-3z"/><path class="w" d="M2 3.500h12v10H4z" stroke-width="1.500"/><path fill="#ee0" d="M1 5.500h3l1 1h7v8H2z"/><path class="rs" d="M5 12V9M7.500 12V8M10 12V8"/></svg></button>
  </div>
  <div class="toolbar">
    <span class="grip"></span>
    <button class="more" aria-label="3D Scatter"><svg viewBox="0 0 16 16"><use href="#cube"/><path class="bf" d="M3 6h2v2H3zM7 3h2v2H7zM11 3h2v2h-2zM9 6h2v2H9zM3 10h2v2H3zM7 11h2v2H7z"/></svg></button>
    <i class="sep"></i>
    <button class="more" aria-label="3D Bars"><svg viewBox="0 0 16 16"><use href="#cube"/><path fill="#889" d="M8.500 12V3.500h2V12M11 9V2h2v7"/><path fill="#88f" stroke="#00c" d="M3.500 14V9h2v5M6.500 14V6h2v8"/></svg></button>
    <i class="sep"></i>
    <button class="more" aria-label="3D Surface"><svg viewBox="0 0 16 16"><use href="#box"/><path class="bf" d="M1 11l4-7h10l-4 8H1z"/></svg></button>
    <button class="more" aria-label="3D Wire"><svg viewBox="0 0 16 16"><use href="#box"/><path class="bs" d="M1 11l4-6h9l-4 6zM3 8h9M5 11l3-6M8 11l3-6"/></svg></button>
    <button class="more" aria-label="Contour"><svg viewBox="0 0 16 16"><path fill="#0e0" d="M.500.500h15v15H.500z" stroke="#0c0"/><g fill="red" stroke="#ff0"><circle cx="3.500" cy="4" r="2"/><circle cx="11.500" cy="4" r="2"/><circle cx="3.500" cy="12" r="2"/><circle cx="11.500" cy="12" r="2"/></g><g fill="#fff" stroke="#00f"><circle cx="7.500" cy="8" r="1.500"/><path d="M6 0l1.500 1.500L9 0M15 6l-1.500 2 1.500 2"/></g><path d="M.500 0v15.500H16"/></svg></button>
    <button disabled aria-label="Image Plot"><svg viewBox="0 0 16 16"><path d="M1.500 1.500h13v13h-13z" stroke-width="1.500"/><path class="k" d="M2 2h6v6H2zM6 6h5q4 3 1 7H8L6 10z"/></svg></button>
    <button disabled aria-label="Profile"><svg viewBox="0 0 16 16"><path class="k" d="M1 8h15v8H1z"/><path d="M1.500 1v6H16M2 5l3-3 3 3 3-2 4-1"/></svg></button>
  </div>
  <div class="toolbar">
    <span class="grip"></span>
    <button disabled aria-label="Mask Points"><svg viewBox="0 0 16 16"><use href="#face"/></svg></button>
    <button disabled aria-label="Unmask Points"><svg viewBox="0 0 16 16"><use href="#face"/><path d="M1 1l13 11M14 1L1 12" stroke-width="1.500"/></svg></button>
    <i class="sep"></i>
    <button disabled aria-label="Change Mask Color"><svg viewBox="0 0 16 16"><path class="k" d="M1 1h3l1 1h6V1h3l1 2v8l-4 4H7l-4-3-2-3z"/><path fill="#f5f6fc" stroke="none" d="M3 3h4v2L5 7H3z"/></svg></button>
    <button disabled aria-label="Hide Masked"><svg viewBox="0 0 16 16"><path class="k" d="M0 4h3v3H0zM4 4h3v3H4zM8 4h3v3H8zM0 8h3v3H0zM8 8h3v3H8zM11 3l3-3 3 3zM11 13l3 3 3-3z"/><path d="M14 1v14"/></svg></button>
    <button disabled aria-label="Swap Mask"><svg viewBox="0 0 16 16"><path class="k" d="M0 4h3v3H0zM4 4h3v3H4zM8 4h3v3H8zM0 8h3v3H0zM4 8h3v3H4zM8 8h3v3H8zM11 3l3-3 3 3zM11 13l3 3 3-3z"/><path d="M14 1v14"/></svg></button>
    <i class="sep"></i>
    <button aria-label="Disable Masking"><svg viewBox="0 0 16 16"><path class="k" d="M0 4h3v3H0zM8 4h3v3H8zM0 8h3v3H0zM4 8h3v3H4zM8 8h3v3H8zM11 3l3-3 3 3zM11 13l3 3 3-3z"/><path class="rf" d="M4 4h3v3H4z"/><path d="M14 1v14" stroke-width="1.500"/></svg></button>
  </div>
</div>

<footer class="status">
  <span class="au">AU : ON</span><span class="cell"></span><span class="cell"></span><span class="cell book-ref">1: [Book1]Sheet1!</span><span class="cell angle">Radian</span>
  <span class="mark">CSDN @老酷鸭很歪</span>
</footer>
</body>
</html>
```
FILE: styles.css
```css
* { box-sizing: border-box; }
:root {
  --ui: "Open Sans", "Noto Sans", "Noto Sans CJK SC", sans-serif;
  --shell: #ebecfb;
  --shell-light: #f3f7fe;
}
body {
  margin: 0;
  min-height: 100vh;
  display: flex;
  flex-direction: column;
  background: var(--shell);
  font-family: var(--ui);
  font-size: 17px;
  color: #1c1c24;
  overflow: hidden;
}
button, select { font: inherit; color: inherit; margin: 0; padding: 0; border: 0; background: none; }
svg { display: block; fill: none; stroke: currentColor; stroke-width: 1; overflow: visible; flex: none; }
.defs { position: absolute; width: 0; height: 0; }

/* icon paints */
.w { fill: #fff; }
.wf { fill: #fff; stroke: none; }
.k { fill: currentColor; stroke: none; }
.dk { fill: #777; stroke: none; }
.y { fill: #ffff70; }
.yd { fill: #f4e800; }
.o { fill: #8c8c20; }
.c { fill: #30dce0; }
.g { fill: #d0d0d0; }
.rf { fill: #f01010; stroke: none; }
.bf { fill: #0000e8; stroke: none; }
.nf { fill: #0000a0; stroke: none; }
.rs { stroke: #f01010; }
.bs { stroke: #0000e8; }
.ks { stroke: #444; }
.xs { stroke: #000; stroke-width: 4; }
.xc { stroke: #18c8d0; stroke-width: 2; }
.t6, .t8, .t9 { fill: currentColor; stroke: none; font-weight: bold; font-family: "Liberation Mono", monospace; }
.t6 { font-size: 6px; }
.t8 { font-size: 8px; font-weight: normal; }
.t9 { font-size: 10px; font-family: "Liberation Serif", serif; }

/* title bar */
.titlebar { position: relative; display: flex; align-items: center; height: 35px; background: #fff; padding: 0 4px 0 2px; }
.logo { width: 24px; height: 26px; }
.titlebar h1 { flex: 1; margin: 0 0 0 4px; font-size: 19px; font-weight: 400; line-height: 34px; color: #000; white-space: nowrap; }
.caption { display: flex; }
.caption button { width: 69px; height: 34px; display: grid; place-items: center; color: #000; }
.caption svg { width: 16px; height: 16px; }
.topshade { position: absolute; top: -4px; right: 4px; width: 438px; height: 6px; background: #ddd; box-shadow: 0 0 5px 2px #ccc; }

/* menu */
.menubar { position: relative; display: flex; align-items: center; height: 36px; background: linear-gradient(to right, var(--shell), var(--shell-light) 60%); }
.menubar > button { height: 34px; padding: 0 11px 2px; }
.menubar .upload {
  position: absolute; right: 161px; top: 7px; z-index: 3;
  display: flex; width: 156px; height: 39px; padding: 0;
  border: 2px solid #2c9ff5; border-radius: 6px; overflow: hidden;
  background: linear-gradient(#dff4ff, #c0e8ff);
}
.cloud { width: 43px; height: 100%; display: grid; place-items: center; background: #25a0fb; }
.cloud svg { width: 28px; height: 26px; }
.uptext { flex: 1; align-self: center; font-size: 18px; line-height: 24px; color: #4cb2f8; font-family: "Noto Sans CJK SC", sans-serif; }

/* toolbars */
.toolrow { display: flex; height: 39px; background: linear-gradient(to right, var(--shell), var(--shell-light) 60%); }
.toolbar {
  display: flex; align-items: center; height: 39px; padding-right: 3px;
  background: linear-gradient(#f5f7fd, #edf0f8 35%, #d0d1e1 65%, #b6b7ce);
  border-bottom: 2px solid #a3a5bf;
  border-radius: 0 0 5px 5px;
}
.grip { width: 15px; height: 24px; flex: none; display: grid; place-items: center; }
.grip::before {
  content: ""; width: 3px; height: 21px;
  background: repeating-linear-gradient(#a2a2aa 0 3px, transparent 3px 6px);
  filter: drop-shadow(1px 1px 0 #fff);
}
.toolbar button { position: relative; flex: none; width: 33px; height: 33px; display: flex; align-items: center; justify-content: center; color: #000; }
.toolbar button svg { width: 24px; height: 24px; }
.toolbar button:disabled { color: #9d9d9f; }
.toolbar button:disabled .w { fill: #eceef6; }
.toolbar .more { width: 39px; justify-content: flex-start; padding-left: 4px; }
.toolbar .more::after { content: ""; position: absolute; right: 3px; bottom: 4px; border: 3px solid #6c6c6c; border-top-color: transparent; border-left-color: transparent; }
.toolbar .split { width: 53px; justify-content: flex-start; padding-left: 9px; }
.toolbar .split::after { content: ""; position: absolute; right: 3px; top: 15px; border: 4px solid transparent; border-top: 5px solid #777; }
.sep { flex: none; width: 12px; height: 26px; background: linear-gradient(#c2c3cf, #c2c3cf) center / 2px 100% no-repeat; }
.toolbar .lt { font-family: "Liberation Sans", sans-serif; font-size: 24px; }
.toolbar .tiny { font: bold 10px "Liberation Mono", monospace; }
.toolbar .sf { font-family: "Liberation Serif", serif; font-size: 24px; padding-left: 3px; }
.toolbar .sm { font-size: 20px; font-weight: bold; }
.toolbar .big { font-size: 30px; }
.toolbar .greek { font-size: 25px; }
.sf sup, .sf sub { font-size: 15px; line-height: 15px; font-weight: normal; }
.sf sup { align-self: flex-start; }
.sf sub { align-self: flex-end; }
.stack { display: flex; flex-direction: column; font-size: 14px; line-height: 13px; font-weight: normal; }
.up::after, .down::after { content: ""; position: absolute; right: 1px; top: 4px; border: 4px solid transparent; }
.up::after { border-top: 0; border-bottom: 5px solid #9d9d9f; }
.down::after { border-bottom: 0; border-top: 5px solid #9d9d9f; }

.combo { position: relative; flex: none; width: 86px; height: 28px; margin: 0 3px; display: flex; align-items: center; background: #f0f1f4; border: 2px solid #b0b0b4; color: #85858a; }
.combo select { appearance: none; flex: 1; min-width: 0; height: 100%; padding-left: 4px; opacity: 1; color: inherit; font-size: 16px; }
.combo::after { content: ""; position: absolute; right: 6px; top: 10px; border: 4px solid transparent; border-top: 5px solid #777; }
.combo.font { width: 189px; padding-left: 8px; }
.combo.font svg { width: 20px; height: 20px; margin-right: 4px; }
.combo.zoom { width: 87px; background: linear-gradient(to right, #fff 64px, #dcdde8 64px); border-color: #fff; color: #1c1c24; }
.combo.zoom::after { border-top-color: #000; }
.line, .rect { position: absolute; left: 5px; width: 49px; }
.line { height: 2px; background: #222; }
.rect { height: 14px; border: 2px solid #222; background: #fff; }

/* main area */
.main { flex: 1; display: grid; grid-template-columns: 32px 46px minmax(0, 1fr) 41px; min-height: 0; }
.dock { padding-top: 6px; }
.docktabs { width: 28px; height: 501px; padding-top: 5px; display: flex; flex-direction: column; align-items: flex-start; gap: 40px; background: #f0f0f0; border-right: 1px solid #dcdce4; border-bottom: 1px solid #dcdce4; }
.docktabs button { writing-mode: vertical-rl; width: 20px; font: 15px/20px "Liberation Mono", monospace; color: #555; text-align: left; }
.side { display: flex; flex-direction: column; align-items: stretch; }
.toolbar.vert {
  flex-direction: column; align-items: center; width: 45px; height: auto; padding: 0 0 3px;
  background: linear-gradient(to right, #f5f7fd, #edf0f8 35%, #d0d1e1 65%, #b6b7ce);
  border: 0; border-right: 2px solid #a3a5bf; border-radius: 0 0 5px 5px;
}
.left .toolbar.vert { align-items: flex-start; padding-left: 2px; }
.vert:first-child { min-height: 594px; }
.right .toolbar.vert { width: 39px; margin-left: 1px; }
.vert .grip { width: 32px; height: 14px; }
.vert .grip::before { width: 21px; height: 3px; background: repeating-linear-gradient(to right, #a2a2aa 0 3px, transparent 3px 6px); }
.vert .sep { width: 30px; height: 12px; background: linear-gradient(#c2c3cf, #c2c3cf) center / 100% 2px no-repeat; }
.toolbar.vert .on { background: #cfe5f6; border: 2px solid #2b8be0; }
.toolbar .tt { font: bold 26px "Liberation Serif", serif; }

.mdi { position: relative; background: #ababab; border: 2px solid #fff; border-top-color: #808084; border-left-color: #808084; overflow: hidden; min-height: 700px; }
.book {
  position: absolute; left: 31px; top: 31px; width: 594px; height: 484px;
  display: flex; flex-direction: column; padding: 0 12px 12px;
  border: 1px solid #101418; border-radius: 8px 8px 0 0;
  background: linear-gradient(#99b4d1, #b9d1ea 45px, #a6c4e2 60px, #dceaf8 180px, #b9d1ea 182px);
  box-shadow: inset 2px 2px 0 #e8f3fc, inset -2px -2px 0 #44cbe0;
}
.booktitle { height: 46px; flex: none; display: flex; align-items: center; gap: 4px; padding: 8px 2px 0; }
.booktitle > svg { width: 24px; height: 24px; }
.booktitle h2 { flex: 1; margin: 0 0 0 2px; font-size: 18px; font-weight: 400; }
.booktitle button { width: 47px; height: 27px; display: grid; place-items: center; border: 1px solid #6c819b; border-radius: 3px; background: linear-gradient(#c5d8ec 48%, #9db9d8 50%, #b8d0ea); box-shadow: inset 0 0 0 1px #dbe9f6; }
.booktitle button svg { width: 18px; height: 18px; }
.booktitle .x { border-color: #5c1c1c; background: linear-gradient(#dd9384 45%, #b83a20 50%, #cf6a50); box-shadow: inset 0 0 0 1px #e8aba0; }
.client { flex: 1; min-height: 0; display: grid; grid-template-columns: minmax(0, 1fr) 26px; grid-template-rows: minmax(0, 1fr) 26px; background: #e0dfe4; border: 2px solid #fff; border-top-color: #808084; border-left-color: #808084; }
.sheet { overflow: hidden; }
table { table-layout: fixed; width: 331px; border-collapse: separate; border-spacing: 0; font-family: "Liberation Sans", sans-serif; font-size: 19px; line-height: 22px; }
th, td { height: 24px; padding: 0; }
th { font-weight: 400; background: #e0dfe4; border-right: 2px solid #222; border-bottom: 2px solid #333; }
tbody th { text-align: right; padding-right: 8px; }
thead th { height: 37px; width: 101px; font-size: 17px; }
thead th:first-child { width: 129px; }
td { background: #fff; border-right: 2px solid #ccc; border-bottom: 2px solid #d0d0d0; }
.meta td { background: #fafac8; }
.vscroll { display: flex; flex-direction: column; background: #f0f0f0; border-left: 1px solid #fff; }
.vscroll button, .hscroll button { display: grid; place-items: center; flex: none; color: #555; }
.vscroll button { height: 26px; }
.vscroll svg, .hscroll svg { width: 16px; height: 16px; stroke-width: 2; }
.vscroll .thumb { height: 114px; margin: 0 2px 0 1px; background: #cdcdcd; }
.vscroll .end { margin-top: auto; }
.splitter { height: 9px; border-top: 2px solid #111; border-bottom: 2px solid #111; background: #fff; }
.tabs { display: flex; background: #fff; }
.tabs .nav { width: 26px; display: grid; place-items: center; background: #f0f0f0; border: 1px solid #777; border-left-color: #fff; }
.nav svg { width: 14px; height: 14px; fill: #444; stroke: none; }
.tab { position: relative; width: 112px; margin-left: 2px; background: #c8c8c8; }
.tab svg { width: 112px; height: 26px; }
.tab span { position: absolute; inset: 0; font: bold 22px/28px "Liberation Mono", monospace; color: #000; }
.fill { flex: 1; background: #c8c8c8; border-top: 2px solid #111; border-right: 2px solid #111; }
.hscroll { display: flex; width: 128px; margin: 0 7px 0 6px; padding: 0 1px; border: solid #111; border-width: 0 2px; background: #f0f0f0; }
.hscroll button { width: 24px; }
.hscroll .thumb { flex: 1; margin: 1px 0; background: #cdcdcd; }
.size { border-left: 2px solid #111; display: grid; place-items: end; background: #f0f0f0; }
.size svg { width: 20px; height: 20px; fill: #bbb; stroke: none; }

/* bottom toolbar and status bar */
.toolrow.bottom { height: 41px; padding-left: 78px; }
.status { position: relative; display: flex; justify-content: flex-end; height: 27px; background: #f0f0f0; border-top: 1px solid #d4d5de; line-height: 30px; white-space: nowrap; }
.au { width: 78px; }
.cell { width: 9px; margin-top: 3px; line-height: 24px; border-left: 2px solid #d6d6d6; }
.cell.book-ref { width: 181px; padding-left: 6px; }
.cell.angle { width: 79px; padding-left: 7px; }
.mark { position: absolute; right: 14px; top: -2px; font: 300 20px/24px "Noto Sans", "Noto Sans CJK SC", sans-serif; color: #86868a; text-shadow: 1px 1px 0 #fff; }
```
